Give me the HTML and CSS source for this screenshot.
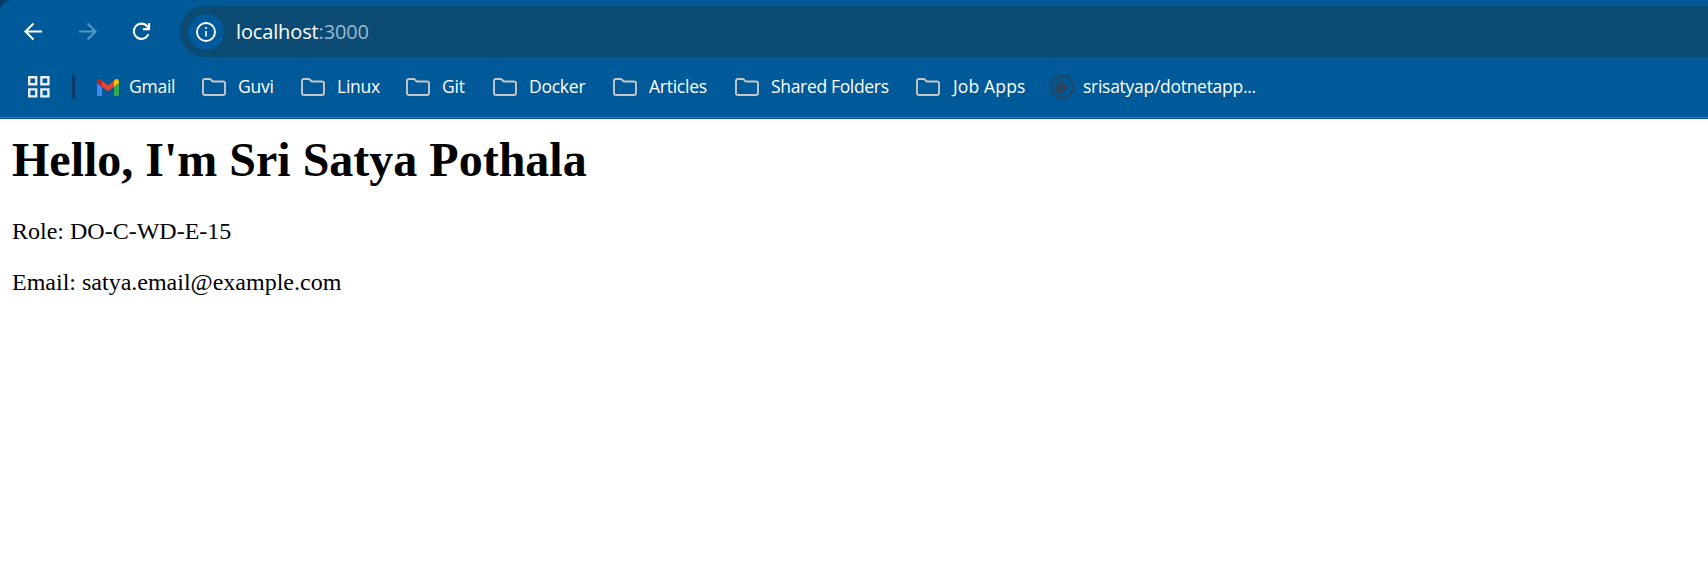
FILE: index.html
```html
<!DOCTYPE html>
<html lang="en">
<head>
<meta charset="utf-8">
<title>localhost:3000</title>
<link rel="stylesheet" href="styles.css">
</head>
<body>
<svg width="0" height="0" class="defs"><symbol id="folder" viewBox="0 0 24 18"><path d="M1 3Q1 1 3 1H7.6Q8.5 1 9.2 1.8L10.8 3.5H21Q23 3.5 23 5.3V15Q23 17 21 17H3Q1 17 1 15Z" fill="none" stroke="#c7c7c7" stroke-width="1.9" stroke-linejoin="round"/></symbol></svg>
<header class="browser">
  <div class="toolbar">
    <svg class="nav-icon" viewBox="0 0 20 20"><path d="M19 10H2M10 1.5L1.5 10L10 18.5" /></svg>
    <svg class="nav-icon disabled" viewBox="0 0 20 20"><path d="M1 10H18M10 1.5L18.5 10L10 18.5" /></svg>
    <svg class="nav-icon" viewBox="0 0 20 20"><path d="M17.3 12.7A8 8 0 1 1 16 4.6L18 7M18 1V7.5H11.5" /></svg>
    <div class="address">
      <div class="info"><svg width="20" height="20" viewBox="0 0 20 20"><circle cx="10" cy="10" r="9" fill="none" stroke="#fff" stroke-width="1.9"/><path d="M10 9V14.5" stroke="#fff" stroke-width="1.6"/><circle cx="10" cy="6.1" r="1" fill="#fff"/></svg></div>
      <div class="url">localhost<span>:3000</span></div>
    </div>
  </div>
  <nav class="bookmarks">
    <svg class="apps" viewBox="0 0 22 22"><path d="M1.2 1.2H8.2V8.2H1.2ZM13.4 1.2H20.4V8.2H13.4ZM1.2 13.4H8.2V20.4H1.2ZM13.4 13.4H20.4V20.4H13.4Z" fill="none" stroke="#eee" stroke-width="2.4"/></svg>
    <i class="divider"></i>
    <a class="bm gmail"><svg width="22" height="17" viewBox="0 0 22 17"><path d="M0 4L5 7.5V17H1.5Q0 17 0 15.5Z" fill="#4285f4"/><path d="M22 4L17 7.5V17H20.5Q22 17 22 15.5Z" fill="#34a853"/><path d="M5 1.7L11 6.2L17 1.7V7.7L11 12.2L5 7.7Z" fill="#ea4335"/><path d="M0 4V2.5C0 .2 2.7-.7 4.2.9L5 1.7V7.7L0 4Z" fill="#c5221f"/><path d="M22 4V2.5C22 .2 19.3-.7 17.8.9L17 1.7V7.7L22 4Z" fill="#fbbc04"/></svg><span>Gmail</span></a>
    <a class="bm guvi"><svg class="folder"><use href="#folder"/></svg><span>Guvi</span></a>
    <a class="bm linux"><svg class="folder"><use href="#folder"/></svg><span>Linux</span></a>
    <a class="bm git"><svg class="folder"><use href="#folder"/></svg><span>Git</span></a>
    <a class="bm docker"><svg class="folder"><use href="#folder"/></svg><span>Docker</span></a>
    <a class="bm articles"><svg class="folder"><use href="#folder"/></svg><span>Articles</span></a>
    <a class="bm shared"><svg class="folder"><use href="#folder"/></svg><span>Shared Folders</span></a>
    <a class="bm jobs"><svg class="folder"><use href="#folder"/></svg><span>Job Apps</span></a>
    <a class="bm repo"><svg width="24" height="24" viewBox="0 0 24 24"><circle cx="12" cy="12" r="11" fill="none" stroke="#27465f" stroke-width="1.8"/><path d="M4 11.5H5V9.5H7.5V7.7H10V5.5H13V9.5H15V11Q16.4 11 16.5 10.2Q15.8 9.2 16.8 8.2Q17.8 8.9 18 10Q19.3 9.6 20.4 10.4Q19.6 12.2 17.2 12.4Q15.2 18.2 9.7 18.2Q3.8 18.2 4 11.5Z" fill="#27465f"/></svg><span>srisatyap/dotnetapp...</span></a>
  </nav>
</header>
<main class="page">
  <h1>Hello, I'm Sri Satya Pothala</h1>
  <p>Role: DO-C-WD-E-15</p>
  <p>Email: satya.email@example.com</p>
</main>
</body>
</html>
```
FILE: styles.css
```css
body { margin: 0; background: #fff; }
.defs { display: block; height: 0; }
.browser {
  box-sizing: border-box;
  height: 119px;
  background: radial-gradient(circle at 12px 12px, #005998 11.5px, #073d65 12.5px) 0 0 / 12px 12px no-repeat, linear-gradient(#005998, #005998);
  font-family: "Open Sans", "Noto Sans", sans-serif;
  color: #fff;
}
.toolbar { display: flex; align-items: center; height: 51px; padding: 6px 0 0 24px; }
.nav-icon { width: 19px; height: 19px; margin-right: 35px; flex: none; fill: none; stroke: #fff; stroke-width: 2.2; }
.disabled { stroke: #5b94c0; }
.address { display: flex; flex: 1; align-items: center; height: 51px; margin-left: -6px; padding-left: 8px; border-radius: 26px 0 0 26px; background: #0a4a73; }
.info { display: flex; align-items: center; justify-content: center; width: 36px; height: 36px; border-radius: 50%; background: #005998; }
.url { margin-left: 12px; font-size: 20px; letter-spacing: -.14px; white-space: nowrap; }
.url span { color: #9eb9d0; }
.bookmarks { display: flex; box-sizing: border-box; align-items: center; height: 61px; padding-left: 28px; border-bottom: 1px solid #3279b5; }
.apps { width: 22px; height: 22px; }
.divider { width: 3px; height: 24px; margin: 0 22px; border-radius: 1px; background: #073d65; }
.bm { display: flex; flex: none; align-items: center; gap: 12px; font-size: 17.5px; line-height: 24px; white-space: nowrap; letter-spacing: -.25px; }
.bm span { padding-bottom: 2px; }
.folder { width: 24px; height: 18px; flex: none; }
.gmail { width: 105px; gap: 10px; }
.guvi { width: 99px; }
.linux { width: 105px; }
.git { width: 87px; }
.docker { width: 120px; }
.articles { width: 122px; }
.shared { width: 181px; letter-spacing: -.33px; }
.jobs { width: 134px; gap: 13px; letter-spacing: .15px; }
.repo { gap: 9px; letter-spacing: -.28px; }
.page { padding: 13px 12px; font-family: "Liberation Serif", "Times New Roman", serif; color: #000; }
.page h1 { margin: 0 0 31px; font-size: 48px; line-height: 55px; }
.page p { margin: 0 0 24px; font-size: 24px; line-height: 27px; }
```
